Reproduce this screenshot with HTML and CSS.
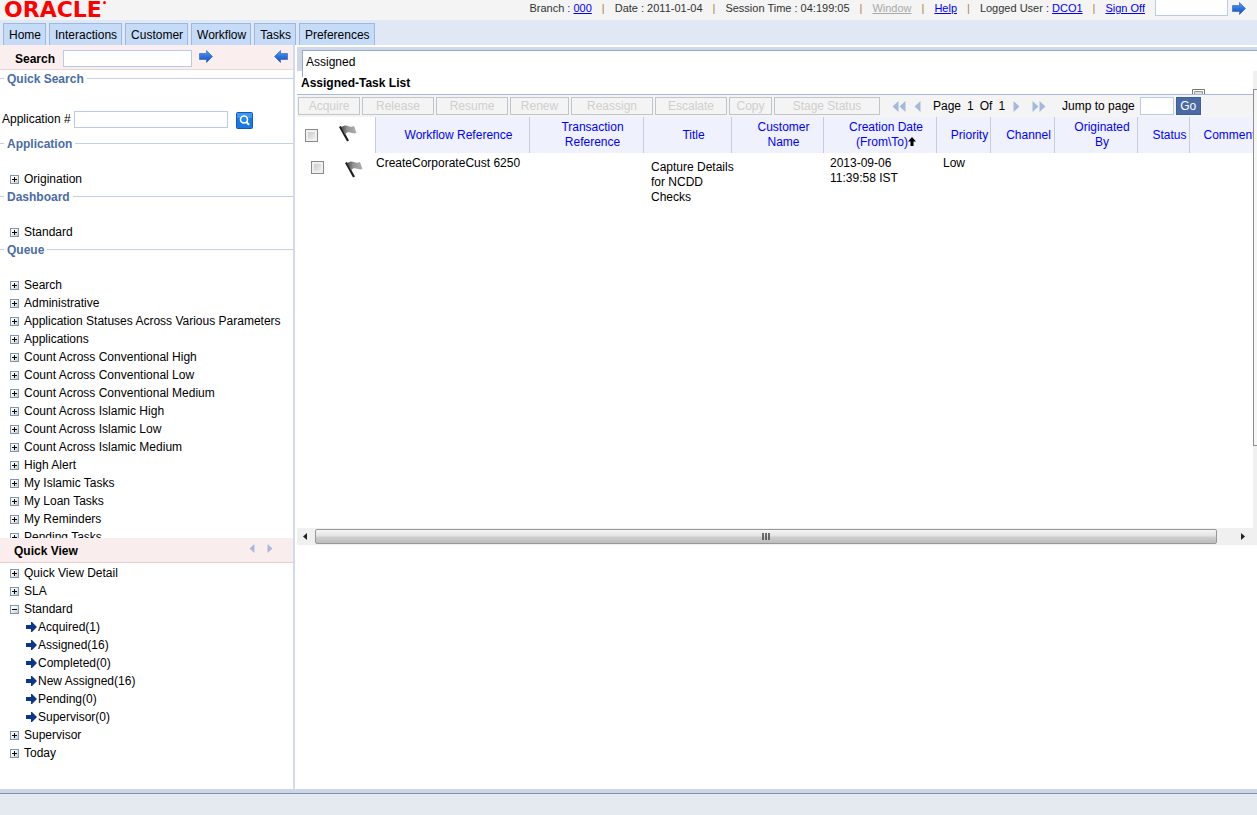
FILE: index.html
```html
<!DOCTYPE html>
<html lang="en">
<head>
    <meta charset="UTF-8">
    <meta name="viewport" content="width=device-width, initial-scale=1.0">
    <title>Assigned-Task List</title>
    <link rel="stylesheet" href="styles.css">
</head>
<body>
    <!-- shared icons -->
    <svg class="defs" width="0" height="0">
        <defs>
            <linearGradient id="blue" x1="0" y1="0" x2="0" y2="1">
                <stop offset="0" stop-color="#58a0f4"/>
                <stop offset="0.5" stop-color="#2b72e0"/>
                <stop offset="1" stop-color="#1a4ca8"/>
            </linearGradient>
            <linearGradient id="box" x1="0" y1="0" x2="1" y2="1">
                <stop offset="0.3" stop-color="#ffffff"/>
                <stop offset="1" stop-color="#c8c4bc"/>
            </linearGradient>
            <linearGradient id="cloth" x1="0" y1="0" x2="1" y2="0">
                <stop offset="0" stop-color="#444"/>
                <stop offset="0.4" stop-color="#949494"/>
                <stop offset="1" stop-color="#b0b0b0"/>
            </linearGradient>
        </defs>
        <symbol id="arrow" viewBox="0 0 14 13">
            <path d="M0.5 3.5H7.5V0.5L13.5 6.5L7.5 12.5V9.5H0.5Z" fill="url(#blue)" stroke="#2a5fb8" stroke-width="0.6"/>
        </symbol>
        <symbol id="plus" viewBox="0 0 9 9">
            <rect x="0.5" y="0.5" width="8" height="8" fill="url(#box)" stroke="#7898b5"/>
            <path d="M2 4.5H7M4.5 2V7" stroke="#000"/>
        </symbol>
        <symbol id="minus" viewBox="0 0 9 9">
            <rect x="0.5" y="0.5" width="8" height="8" fill="url(#box)" stroke="#7898b5"/>
            <path d="M2 4.5H7" stroke="#000"/>
        </symbol>
        <symbol id="go" viewBox="0 0 11 10">
            <path d="M0 3H5V0H6L11 5L6 10H5V7H0Z" fill="#0c3590"/>
        </symbol>
        <symbol id="flag" viewBox="0 0 18 17">
            <path d="M1 1.5L9 16" stroke="#1c1c1c" stroke-width="2.2"/>
            <path d="M2 2C5 0.5 7 0 9 1S13 2 15 1L17.5 8C15 9 13 8 11 7.5S8 7 6 9.5Z" fill="url(#cloth)"/>
        </symbol>
        <symbol id="tri" viewBox="0 0 7 11">
            <path d="M6.5 0V11L0.5 5.5Z" fill="#a5b9dd"/>
        </symbol>
    </svg>

    <header class="topbar">
        <div class="logo">ORACLE<span>•</span></div>
        <div class="session">
            <span>Branch : <a href="#">000</a></span>
            <i>|</i>
            <span>Date : 2011-01-04</span>
            <i>|</i>
            <span>Session Time : 04:199:05</span>
            <i>|</i>
            <a class="off" href="#">Window</a>
            <i>|</i>
            <a href="#">Help</a>
            <i>|</i>
            <span>Logged User : <a href="#">DCO1</a></span>
            <i>|</i>
            <a href="#">Sign Off</a>
        </div>
        <input class="fastpath" type="text" aria-label="Fast path">
        <button class="icon-btn" aria-label="Go to screen"><svg width="14" height="13"><use href="#arrow"/></svg></button>
    </header>

    <nav class="tabs">
        <a href="#">Home</a>
        <a href="#">Interactions</a>
        <a href="#">Customer</a>
        <a href="#">Workflow</a>
        <a href="#">Tasks</a>
        <a href="#">Preferences</a>
    </nav>

    <div class="main">
        <aside class="sidebar">
            <div class="search-bar">
                <label for="search">Search</label>
                <input id="search" type="text">
                <button class="icon-btn" aria-label="Search"><svg width="14" height="13"><use href="#arrow"/></svg></button>
                <button class="icon-btn collapse" aria-label="Collapse"><svg class="flip" width="14" height="13"><use href="#arrow"/></svg></button>
            </div>

            <div class="menu">
                <h3>Quick Search</h3>
                <div class="quick">
                    <label for="app-no">Application #</label>
                    <input id="app-no" type="text">
                    <button class="icon-btn" aria-label="Find application">
                        <svg width="17" height="17" viewBox="0 0 17 17">
                            <rect x="0.5" y="0.5" width="16" height="16" rx="1" fill="#1a78e0" stroke="#1259b8"/>
                            <rect x="1" y="1" width="15" height="5" fill="#3f98f0"/>
                            <circle cx="8" cy="7.5" r="3.5" fill="#2a85e8" stroke="#fff" stroke-width="1.6"/>
                            <path d="M10.5 10L13 12.8" stroke="#fff" stroke-width="2"/>
                        </svg>
                    </button>
                </div>
                <h3>Application</h3>
                <ul class="tree">
                    <li><svg><use href="#plus"/></svg>Origination</li>
                </ul>
                <h3>Dashboard</h3>
                <ul class="tree">
                    <li><svg><use href="#plus"/></svg>Standard</li>
                </ul>
                <h3>Queue</h3>
                <ul class="tree">
                    <li><svg><use href="#plus"/></svg>Search</li>
                    <li><svg><use href="#plus"/></svg>Administrative</li>
                    <li><svg><use href="#plus"/></svg>Application Statuses Across Various Parameters</li>
                    <li><svg><use href="#plus"/></svg>Applications</li>
                    <li><svg><use href="#plus"/></svg>Count Across Conventional High</li>
                    <li><svg><use href="#plus"/></svg>Count Across Conventional Low</li>
                    <li><svg><use href="#plus"/></svg>Count Across Conventional Medium</li>
                    <li><svg><use href="#plus"/></svg>Count Across Islamic High</li>
                    <li><svg><use href="#plus"/></svg>Count Across Islamic Low</li>
                    <li><svg><use href="#plus"/></svg>Count Across Islamic Medium</li>
                    <li><svg><use href="#plus"/></svg>High Alert</li>
                    <li><svg><use href="#plus"/></svg>My Islamic Tasks</li>
                    <li><svg><use href="#plus"/></svg>My Loan Tasks</li>
                    <li><svg><use href="#plus"/></svg>My Reminders</li>
                    <li><svg><use href="#plus"/></svg>Pending Tasks</li>
                </ul>
            </div>

            <div class="quick-view">
                <div class="view-head">
                    <h2>Quick View</h2>
                    <button class="icon-btn" aria-label="Previous view"><svg width="6" height="9"><use href="#tri"/></svg></button>
                    <button class="icon-btn" aria-label="Next view"><svg class="flip" width="6" height="9"><use href="#tri"/></svg></button>
                </div>
                <ul class="tree">
                    <li><svg><use href="#plus"/></svg>Quick View Detail</li>
                    <li><svg><use href="#plus"/></svg>SLA</li>
                    <li><svg><use href="#minus"/></svg>Standard</li>
                    <li class="sub"><svg><use href="#go"/></svg>Acquired(1)</li>
                    <li class="sub"><svg><use href="#go"/></svg>Assigned(16)</li>
                    <li class="sub"><svg><use href="#go"/></svg>Completed(0)</li>
                    <li class="sub"><svg><use href="#go"/></svg>New Assigned(16)</li>
                    <li class="sub"><svg><use href="#go"/></svg>Pending(0)</li>
                    <li class="sub"><svg><use href="#go"/></svg>Supervisor(0)</li>
                    <li><svg><use href="#plus"/></svg>Supervisor</li>
                    <li><svg><use href="#plus"/></svg>Today</li>
                </ul>
            </div>
        </aside>

        <main class="content">
            <div class="open-tab"><span>Assigned</span></div>
            <div class="pane">
                <div class="list">
                    <h1>Assigned-Task List</h1>
                    <svg class="restore" width="13" height="5" viewBox="0 0 13 5"><path d="M0.5 6V0.5H12.5V6" fill="#fff" stroke="#777"/><path d="M2.5 6V2.5H10.5V6" fill="#ddd" stroke="#999"/></svg>

                    <div class="toolbar">
                        <button class="w62" disabled>Acquire</button>
                        <button class="w72" disabled>Release</button>
                        <button class="w72" disabled>Resume</button>
                        <button class="w59" disabled>Renew</button>
                        <button class="w82" disabled>Reassign</button>
                        <button class="w72" disabled>Escalate</button>
                        <button class="w43" disabled>Copy</button>
                        <button class="w106" disabled>Stage Status</button>
                        <div class="pager">
                            <a href="#" aria-label="First page"><svg width="7" height="11"><use href="#tri"/></svg><svg width="7" height="11"><use href="#tri"/></svg></a>
                            <a href="#" aria-label="Previous page"><svg width="7" height="11"><use href="#tri"/></svg></a>
                            <span class="page"><span>Page</span><span>1</span><span>Of</span><span>1</span></span>
                            <a href="#" aria-label="Next page"><svg class="flip" width="7" height="11"><use href="#tri"/></svg></a>
                            <a class="last" href="#" aria-label="Last page"><svg class="flip" width="7" height="11"><use href="#tri"/></svg><svg class="flip" width="7" height="11"><use href="#tri"/></svg></a>
                        </div>
                        <label for="jump">Jump to page</label>
                        <input id="jump" type="text">
                        <button class="go">Go</button>
                    </div>

                    <div class="table-wrap">
                        <table>
                            <colgroup>
                                <col class="c-check"><col class="c-flag"><col class="c-ref"><col class="c-trans"><col class="c-title"><col class="c-cust">
                                <col class="c-date"><col class="c-prio"><col class="c-chan"><col class="c-orig"><col class="c-status"><col class="c-comm">
                            </colgroup>
                            <thead>
                                <tr>
                                    <th class="plain"><input type="checkbox" aria-label="Select all"></th>
                                    <th class="plain"><svg width="18" height="17"><use href="#flag"/></svg></th>
                                    <th>Workflow Reference</th>
                                    <th>Transaction Reference</th>
                                    <th>Title</th>
                                    <th>Customer Name</th>
                                    <th>Creation Date (From\To)<svg width="8" height="9" viewBox="0 0 8 9"><path d="M4 0L8 4.5H5.5V9H2.5V4.5H0Z" fill="#000"/></svg></th>
                                    <th>Priority</th>
                                    <th>Channel</th>
                                    <th>Originated By</th>
                                    <th>Status</th>
                                    <th class="comments">Comments</th>
                                </tr>
                            </thead>
                            <tbody>
                                <tr>
                                    <td class="mark"><input type="checkbox" aria-label="Select task"></td>
                                    <td class="mark"><svg width="18" height="17"><use href="#flag"/></svg></td>
                                    <td class="ref">CreateCorporateCust 6250</td>
                                    <td></td>
                                    <td class="title"><div>Capture Details for NCDD Checks</div></td>
                                    <td></td>
                                    <td>2013-09-06 11:39:58 IST</td>
                                    <td>Low</td>
                                    <td></td>
                                    <td></td>
                                    <td></td>
                                    <td></td>
                                </tr>
                            </tbody>
                        </table>
                    </div>

                    <div class="hscroll">
                        <svg width="4" height="7" viewBox="0 0 4 7"><path d="M4 0V7L0 3.5Z" fill="#222"/></svg>
                        <div class="thumb"><svg width="9" height="7" viewBox="0 0 9 7"><path d="M1 0V7M4 0V7M7 0V7" stroke="#444" stroke-width="1.5"/></svg></div>
                        <svg class="flip" width="4" height="7" viewBox="0 0 4 7"><path d="M4 0V7L0 3.5Z" fill="#222"/></svg>
                    </div>
                </div>
                <div class="vscroll"><div></div></div>
            </div>
        </main>
    </div>

    <footer></footer>
</body>
</html>
```
FILE: styles.css
```css
* {
    box-sizing: border-box;
}

body {
    margin: 0;
    height: 100vh;
    display: flex;
    flex-direction: column;
    font-family: "Liberation Sans", Arial, sans-serif;
    font-size: 12px;
    color: #000;
    background: #fff;
    overflow: hidden;
}

h1, h2, h3, ul {
    margin: 0;
    padding: 0;
}

h1, h2 {
    font-size: 12px;
}

input[type="text"] {
    border: 1px solid #b9cbec;
    background: #fff;
    padding: 0 2px;
    font: inherit;
}

svg {
    display: block;
}

.defs {
    position: absolute;
}

.flip {
    transform: scaleX(-1);
}

.icon-btn {
    border: none;
    background: none;
    padding: 0;
    cursor: pointer;
}

/* Top bar */
.topbar {
    display: flex;
    height: 20px;
    flex: none;
    background: #f4f4f4;
    padding: 0 11px 0 4px;
}

.logo {
    display: flex;
    color: #f00;
    font-family: "DejaVu Sans", sans-serif;
    font-size: 22px;
    font-weight: bold;
    line-height: 19px;
}

.logo span {
    font-size: 8px;
    line-height: 8px;
}

.session {
    margin-left: auto;
    display: flex;
    gap: 10px;
    font-size: 11px;
    line-height: 17px;
    color: #333;
}

.session a {
    color: #00f;
}

.session .off {
    color: #aaa;
}

.session i {
    font-style: normal;
    color: #b07c4a;
}

.fastpath {
    width: 73px;
    height: 16px;
    margin: 0 4px 0 10px;
    border-top: none !important;
}

.topbar .icon-btn {
    height: 17px;
}

/* Main tabs */
.tabs {
    display: flex;
    flex: none;
    gap: 3px;
    height: 25px;
    padding: 3px 3px 0;
    background: #e0e7f5;
}

.tabs a {
    border: 1px solid #9db8df;
    border-bottom: none;
    background: #c5dbf7;
    padding: 0 4px 0 5px;
    line-height: 22px;
    color: #000;
    text-decoration: none;
}

.main {
    display: flex;
    flex: 1;
    min-height: 0;
}

/* Left side */
.sidebar {
    width: 295px;
    flex: none;
    display: flex;
    flex-direction: column;
    border-right: 2px solid #d3daeb;
}

.search-bar {
    display: flex;
    flex: none;
    height: 25px;
    padding: 5px 5px 0 15px;
    background: #faeeee;
    border-bottom: 1px solid #e8d5d8;
}

.search-bar label {
    width: 48px;
    font-weight: bold;
    line-height: 18px;
}

.search-bar input {
    width: 129px;
    height: 17px;
    margin-right: 7px;
}

.search-bar .icon-btn {
    height: 13px;
}

.search-bar .collapse {
    margin-left: auto;
}

.menu {
    flex: 1;
    min-height: 0;
    overflow: hidden;
}

.menu h3 {
    display: flex;
    align-items: center;
    gap: 3px;
    height: 17px;
    font-size: 12px;
    color: #4a6ca8;
}

.menu h3::before,
.menu h3::after {
    content: "";
    width: 4px;
    border-top: 1px solid #c3d0e8;
}

.menu h3::after {
    flex: 1;
}

.quick {
    display: flex;
    height: 48px;
    padding: 24px 0 0 2px;
}

.quick label {
    width: 72px;
    line-height: 17px;
    white-space: nowrap;
}

.quick input {
    width: 154px;
    height: 17px;
    margin-right: 8px;
}

.quick .icon-btn {
    height: 19px;
}

.tree {
    list-style: none;
    line-height: 18px;
}

.menu .tree {
    padding-top: 18px;
}

.tree li {
    display: flex;
    align-items: center;
    gap: 5px;
    height: 18px;
    padding-left: 10px;
    white-space: nowrap;
}

.tree svg {
    width: 9px;
    height: 9px;
}

.tree .sub {
    gap: 1px;
    padding-left: 26px;
}

.tree .sub svg {
    width: 11px;
    height: 10px;
}

.quick-view {
    flex: none;
    padding-bottom: 27px;
}

.view-head {
    display: flex;
    gap: 12px;
    height: 25px;
    margin-bottom: 1px;
    padding: 0 20px 0 14px;
    background: #f9eded;
    border-bottom: 1px solid #e8cfd2;
}

.view-head h2 {
    margin-right: auto;
    line-height: 26px;
}

.view-head .icon-btn {
    height: 21px;
}

/* Right side */
.content {
    flex: 1;
    min-width: 0;
    display: flex;
    flex-direction: column;
    padding: 2px 0 0 2px;
}

.open-tab {
    flex: none;
    height: 24px;
    border-top: 3px solid #d0d8e8;
    border-left: 5px solid #d0d8e8;
}

.open-tab span {
    display: block;
    border-top: 1px solid #90acd4;
    border-left: 1px solid #90acd4;
    height: 27px;
    padding-left: 3px;
    line-height: 22px;
}

.pane {
    display: flex;
    height: 474px;
}

.list {
    position: relative;
    flex: 1;
    min-width: 0;
    display: flex;
    flex-direction: column;
}

.list h1 {
    height: 24px;
    padding-left: 4px;
    line-height: 24px;
    border-bottom: 1px solid #a9b9d6;
}

.restore {
    position: absolute;
    top: 18px;
    right: 48px;
}

.toolbar {
    display: flex;
    align-items: center;
    gap: 2px;
    flex: none;
    height: 22px;
    padding-left: 1px;
    background: #f4f4f4;
    white-space: nowrap;
}

.toolbar button {
    height: 18px;
    flex: none;
    padding: 0;
    border: 1px solid #c0c5cc;
    background: #f4f4f4;
    font: inherit;
    color: #cfcfcf;
}

.w43 { width: 43px; }
.w59 { width: 59px; }
.w62 { width: 62px; }
.w72 { width: 72px; }
.w82 { width: 82px; }
.w106 { width: 106px; }

.pager {
    display: flex;
    align-items: center;
    gap: 8px;
    margin: 0 14px 0 10px;
}

.pager a {
    display: flex;
}

.pager .last {
    margin-left: 4px;
}

.page {
    display: flex;
    gap: 6px;
    padding: 0 0 0 4px;
}

.toolbar input {
    width: 34px;
    height: 18px;
    margin-left: 3px;
}

.toolbar .go {
    width: 25px;
    border-color: #3f5f98;
    background: #4a6aa5;
    color: #fff;
}

/* Task table */
.table-wrap {
    flex: 1;
    overflow: hidden;
}

table {
    width: 1000px;
    min-width: 100%;
    table-layout: fixed;
    border-collapse: collapse;
    line-height: 15px;
}

.c-check { width: 34px; }
.c-flag { width: 44px; }
.c-ref { width: 154px; }
.c-trans { width: 114px; }
.c-title { width: 88px; }
.c-cust { width: 92px; }
.c-date { width: 113px; }
.c-prio { width: 54px; }
.c-chan { width: 64px; }
.c-orig { width: 83px; }
.c-status { width: 52px; }

th {
    height: 36px;
    padding: 0 0 0 13px;
    border-left: 1px solid #c5cde0;
    background: #eff2fc;
    font-weight: normal;
    color: #00f;
}

th svg {
    display: inline-block;
}

th.plain {
    padding: 0 0 0 8px;
    border-left: none;
    background: #fff;
    text-align: left;
}

th.comments {
    padding-left: 14px;
    text-align: left;
}

td {
    padding: 3px 0 0 7px;
    vertical-align: top;
}

td.ref {
    padding-left: 1px;
    white-space: nowrap;
}

td.title {
    padding: 7px 0 0 8px;
}

td.title div {
    margin-right: -6px;
}

td.mark {
    padding: 8px 0 0 14px;
}

input[type="checkbox"] {
    appearance: none;
    display: block;
    width: 13px;
    height: 13px;
    margin: 0;
    border: 1px solid #8a8a8a;
    background: linear-gradient(135deg, #c4c4c4, #f6f6f6);
    box-shadow: inset 0 0 0 2px #f0f0f0;
}

/* Scroll bars */
.hscroll {
    display: flex;
    align-items: center;
    flex: none;
    gap: 8px;
    height: 17px;
    padding: 0 8px 0 6px;
    background: #f0f0f0;
}

.thumb {
    flex: 1;
    display: flex;
    justify-content: center;
    height: 15px;
    margin-right: 16px;
    padding-top: 3px;
    border: 1px solid #989898;
    border-radius: 2px;
    background: linear-gradient(#f5f5f5, #e2e2e2 48%, #cfcfcf 52%, #bcbcbc);
}

.vscroll {
    width: 4px;
    background: #f0f0f0;
}

.vscroll div {
    height: 357px;
    margin-top: 18px;
    border: 1px solid #8f8f8f;
    border-right: none;
    background: #f5f5f5;
}

footer {
    flex: none;
    height: 26px;
    border-top: 4px solid #cdd5e6;
    background: #e5e9f0;
    box-shadow: inset 0 1px #7f93b5;
}
```
